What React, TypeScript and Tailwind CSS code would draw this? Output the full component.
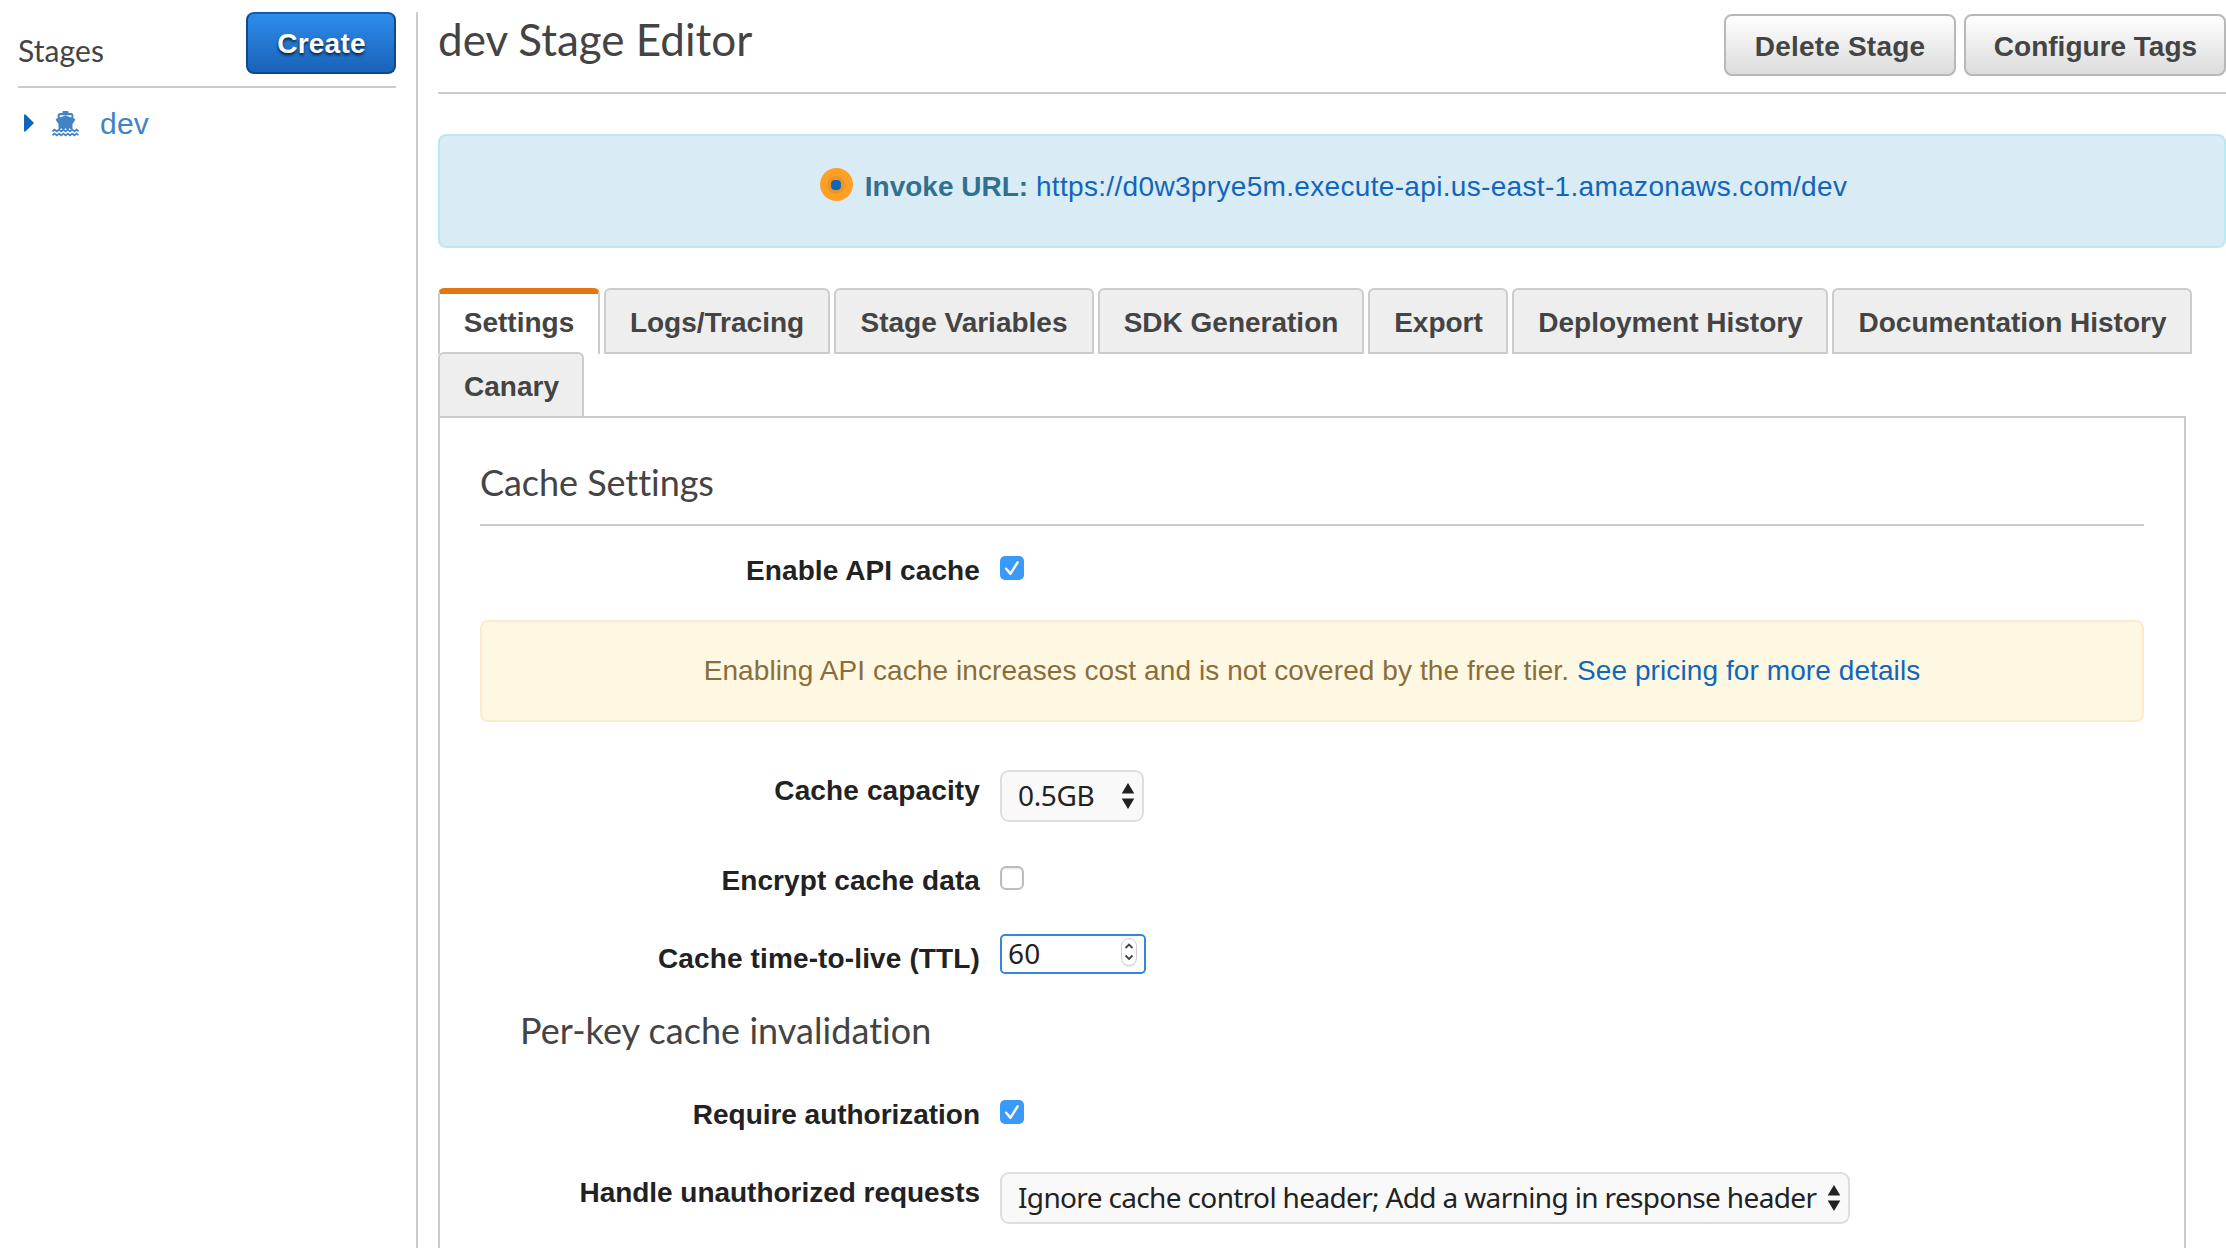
import type { ReactNode } from "react";

const tabs = [
  { label: "Settings", width: "w-[162px]" },
  { label: "Logs/Tracing", width: "w-[226px]" },
  { label: "Stage Variables", width: "w-[260px]" },
  { label: "SDK Generation", width: "w-[266px]" },
  { label: "Export", width: "w-[140px] pl-[1px]" },
  { label: "Deployment History", width: "w-[316px] pl-[1px]" },
  { label: "Documentation History", width: "w-[360px] pl-[1px]" },
  { label: "Canary", width: "w-[146px] pl-[1px] -mt-[2px]" },
];

function ShipIcon() {
  return (
    <svg width="27" height="26" viewBox="0 0 27 26" className="shrink-0" fill="#4183c4">
      <path d="M10.500 2V.8a.8.8 0 0 1 .8-.8h4.400a.8.8 0 0 1 .8.8V2H19c1.300 0 2.400 1 2.400 2.300v3l1.200.5c.7.3.8.8.4 1.400L20.500 13v4.600l-1.400 1-1.400-1.300-2.100 1.600-2.100-1.600-2.100 1.600-2.100-1.600-1.400 1.300-1.400-1V13L4 9.200c-.4-.6-.3-1.100.4-1.400l1.200-.5v-3C5.600 3 6.700 2 8 2zM7.600 4.200v2.300L13.500 4.600l5.900 1.900V4.200z" />
      <g fill="none" stroke="#4183c4" strokeWidth="1.700">
        <path d="M.5 20.300l2.100-1.600 2.200 1.800 2.200-1.800 2.200 1.800 2.200-1.800 2.200 1.800 2.200-1.800 2.200 1.800 2.200-1.800 2.200 1.800 2.200-1.800 1.900 1.600" />
        <path d="M.5 24.200l2.100-1.600 2.200 1.800 2.200-1.800 2.200 1.800 2.200-1.800 2.200 1.800 2.200-1.800 2.200 1.800 2.200-1.800 2.200 1.800 2.200-1.800 1.900 1.600" />
      </g>
    </svg>
  );
}

function Checkbox({ checked }: { checked?: boolean }) {
  if (!checked) {
    return (
      <span className="mt-[2px] block size-6 rounded-[6px] border-2 border-[#bdbdbd] bg-white shadow-[inset_0_1px_2px_rgba(0,0,0,0.12)]" />
    );
  }
  return (
    <span className="mt-[2px] flex size-6 items-center justify-center rounded-[5px] bg-[#3b99fc]">
      <svg width="24" height="24" viewBox="0 0 24 24" fill="none" stroke="#fff" strokeWidth="2.500" strokeLinecap="round" strokeLinejoin="round">
        <path d="M6.200 12.800l4.200 5L17.600 6.300" />
      </svg>
    </span>
  );
}

function Row({ label, className, labelClass = "pt-[1px] tracking-[0.1px]", children }: { label: string; className: string; labelClass?: string; children: ReactNode }) {
  return (
    <div className={`flex items-start gap-5 ${className}`}>
      <span className={`w-[500px] shrink-0 text-right font-bold text-[#222] ${labelClass}`}>{label}</span>
      {children}
    </div>
  );
}

function Select({ value, className, textClass }: { value: string; className: string; textClass: string }) {
  return (
    <div className={`flex h-[52px] justify-between rounded-[9px] border-2 border-[#dedede] bg-[#f9f9f9] pl-4 ${className}`}>
      <span className={`whitespace-nowrap pt-[3px] font-['Noto_Sans',sans-serif] leading-[40px] text-[#222] ${textClass}`}>{value}</span>
      <svg width="14" height="28" viewBox="0 0 14 28" className="mt-[10px] shrink-0" fill="#222">
        <path d="M7 1l6.300 10.500H.7zM7 27L.7 16.500h12.600z" />
      </svg>
    </div>
  );
}

export default function App() {
  return (
    <div className="flex h-[1248px] w-[2226px] overflow-hidden bg-white font-['Liberation_Sans',Arial,sans-serif] text-[28px] leading-[32px] text-[#444] [font-variant-ligatures:none]">
      <aside className="w-[396px] shrink-0 pl-[18px] pt-3">
        <div className="flex h-[76px] items-start justify-between border-b-2 border-[#ccc]">
          <h2 className="pt-[20px] font-['Lato',sans-serif] text-[30px] leading-[36px] tracking-[0.1px]">Stages</h2>
          <button className="h-[62px] w-[150px] rounded-[8px] border-2 border-[#0e4a8c] border-t-[#1659a8] bg-linear-to-b from-[#2e8cec] to-[#1863b8] pl-[1px] pt-[2px] font-bold tracking-[0.25px] text-white [text-shadow:0_2px_3px_rgba(0,0,0,0.75)]">
            Create
          </button>
        </div>
        <div className="flex items-start pl-[6px] pt-[19px] text-[#4183c4]">
          <svg width="10" height="18" viewBox="0 0 10 18" className="mt-[7px]" fill="#1166bb">
            <path d="M0 .5h1.500L10 9l-8.500 8.500H0z" />
          </svg>
          <span className="ml-[18px] mt-[4px]"><ShipIcon /></span>
          <span className="ml-[21px] text-[30px] leading-[34px] tracking-[0.2px]">dev</span>
        </div>
      </aside>

      <div className="ml-5 mt-3 w-[2px] shrink-0 bg-[#ccc]" />

      <main className="ml-5 flex w-[1788px] shrink-0 flex-col">
        <header className="flex h-[94px] shrink-0 items-start justify-between border-b-2 border-[#ccc] pt-[14px]">
          <h1 className="-mt-[1px] font-['Lato',sans-serif] text-[44px] leading-[52px]">dev Stage Editor</h1>
          <div className="flex gap-2 font-bold">
            <button className="h-[62px] w-[232px] rounded-[8px] border-2 border-[#b8b8b8] bg-linear-to-b from-white to-[#dcdcdc] pt-[3px] tracking-[0.2px]">Delete Stage</button>
            <button className="h-[62px] w-[262px] rounded-[8px] border-2 border-[#b8b8b8] bg-linear-to-b from-white to-[#dcdcdc] pl-[1px] pt-[3px]">Configure Tags</button>
          </div>
        </header>

        <div className="mt-10 flex h-[114px] shrink-0 items-start justify-center rounded-[8px] border-2 border-[#bce8f1] bg-[#d9ebf5] pl-[3px] pt-[32px]">
          <span className="flex size-[33px] items-center justify-center rounded-full bg-[#ff9f26]">
            <span className="flex size-[18px] items-center justify-center rounded-full bg-[#ec9522]">
              <span className="size-[10px] rounded-[4px] bg-[#1166bb]" />
            </span>
          </span>
          <span className="ml-[12px] mt-[3px] whitespace-pre font-bold text-[#31708f]">Invoke URL: </span>
          <a className="mt-[3px] tracking-[0.33px] text-[#1166bb]">https://d0w3prye5m.execute-api.us-east-1.amazonaws.com/dev</a>
        </div>

        <nav className="mt-10 flex shrink-0 flex-wrap gap-x-1 font-bold">
          {tabs.map((tab, i) => (
            <div
              key={tab.label}
              className={`h-[66px] whitespace-nowrap rounded-t-[6px] text-center ${tab.width} ${
                i === 0
                  ? "border-x-2 border-t-[6px] border-x-[#ccc] border-t-[#e17712] bg-white pt-[13px]"
                  : "border-2 border-[#ccc] bg-[#eee] pt-[17px]"
              }`}
            >
              {tab.label}
            </div>
          ))}
        </nav>

        <section className="-mt-[2px] w-[1748px] grow border-2 border-b-0 border-[#ccc] px-10 pt-[42px]">
          <h2 className="border-b-2 border-[#ccc] pb-5 font-['Lato',sans-serif] text-[36px] leading-[44px] tracking-[-0.05px]">Cache Settings</h2>

          <Row label="Enable API cache" className="mt-7 h-8">
            <Checkbox checked />
          </Row>

          <div className="mt-[34px] h-[102px] rounded-[8px] border-2 border-[#faebcc] bg-[#fef8e2] pt-[33px] text-center tracking-[0.09px] text-[#8a6d3b]">
            Enabling API cache increases cost and is not covered by the free tier.{" "}
            <a className="text-[#1166bb]">See pricing for more details</a>
          </div>

          <Row label="Cache capacity" className="mt-12 h-[52px]" labelClass="pt-[5px] tracking-[0.13px]">
            <Select value="0.5GB" className="w-[144px] pr-[7px]" textClass="tracking-[-0.35px]" />
          </Row>

          <Row label="Encrypt cache data" className="mt-[42px] h-8">
            <Checkbox />
          </Row>

          <Row label="Cache time-to-live (TTL)" className="mt-[38px] h-10" labelClass="pt-[9px] tracking-[0.13px]">
            <div className="flex h-10 w-[146px] justify-between rounded-[5px] border-2 border-[#3387dd] bg-white pl-[6px] pr-[7px]">
              <span className="-mt-[1px] font-['Noto_Sans',sans-serif] leading-[36px] tracking-[0.3px] text-[#222]">60</span>
              <span className="mt-[2px] flex h-[28px] w-4 items-center justify-center rounded-full border border-[#d0d0d0] shadow-[0_1px_1px_rgba(0,0,0,0.1)]">
                <svg width="10" height="20" viewBox="0 0 10 20" className="shrink-0" fill="none" stroke="#444" strokeWidth="1.800">
                  <path d="M1.500 6L5 2.500 8.500 6M1.500 13.500L5 17l3.500-3.500" />
                </svg>
              </span>
            </div>
          </Row>

          <h3 className="mt-[34px] pl-[40px] font-['Lato',sans-serif] text-[36px] leading-[44px] tracking-[0.05px]">Per-key cache invalidation</h3>

          <Row label="Require authorization" className="mt-[46px] h-8" labelClass="pt-[1px] tracking-[-0.03px]">
            <Checkbox checked />
          </Row>

          <Row label="Handle unauthorized requests" className="mt-[42px] h-[52px]" labelClass="pt-[5px] tracking-[-0.03px]">
            <Select
              value="Ignore cache control header; Add a warning in response header"
              className="w-[850px] pr-[7px]"
              textClass="tracking-[-0.65px]"
            />
          </Row>
        </section>
      </main>
    </div>
  );
}
